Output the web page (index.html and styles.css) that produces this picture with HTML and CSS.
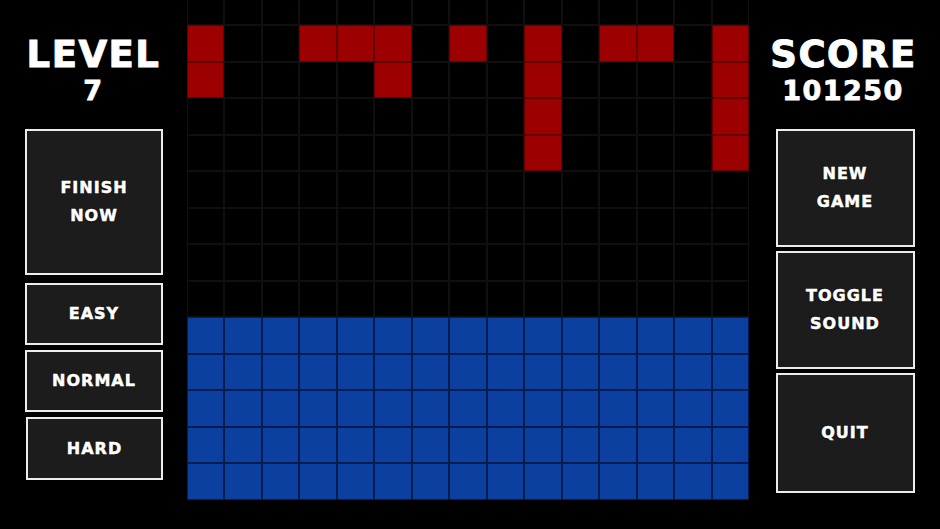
FILE: index.html
```html
<!DOCTYPE html>
<html>
<head>
<meta charset="utf-8">
<link rel="stylesheet" href="styles.css">
</head>
<body>
<div class="screen">
  <div class="side left">
    <div class="title">LEVEL</div>
    <div class="value">7</div>
    <div class="buttons left-buttons">
      <div class="btn finish">FINISH<br>NOW</div>
      <div class="btn small">EASY</div>
      <div class="btn small">NORMAL</div>
      <div class="btn small hard">HARD</div>
    </div>
  </div>
  <div class="board">
    <span class="e"></span><span class="e"></span><span class="e"></span><span class="e"></span><span class="e"></span><span class="e"></span><span class="e"></span><span class="e"></span><span class="e"></span><span class="e"></span><span class="e"></span><span class="e"></span><span class="e"></span><span class="e"></span><span class="e"></span>
    <span class="r"></span><span class="e"></span><span class="e"></span><span class="r"></span><span class="r"></span><span class="r"></span><span class="e"></span><span class="r"></span><span class="e"></span><span class="r"></span><span class="e"></span><span class="r"></span><span class="r"></span><span class="e"></span><span class="r"></span>
    <span class="r"></span><span class="e"></span><span class="e"></span><span class="e"></span><span class="e"></span><span class="r"></span><span class="e"></span><span class="e"></span><span class="e"></span><span class="r"></span><span class="e"></span><span class="e"></span><span class="e"></span><span class="e"></span><span class="r"></span>
    <span class="e"></span><span class="e"></span><span class="e"></span><span class="e"></span><span class="e"></span><span class="e"></span><span class="e"></span><span class="e"></span><span class="e"></span><span class="r"></span><span class="e"></span><span class="e"></span><span class="e"></span><span class="e"></span><span class="r"></span>
    <span class="e"></span><span class="e"></span><span class="e"></span><span class="e"></span><span class="e"></span><span class="e"></span><span class="e"></span><span class="e"></span><span class="e"></span><span class="r"></span><span class="e"></span><span class="e"></span><span class="e"></span><span class="e"></span><span class="r"></span>
    <span class="e"></span><span class="e"></span><span class="e"></span><span class="e"></span><span class="e"></span><span class="e"></span><span class="e"></span><span class="e"></span><span class="e"></span><span class="e"></span><span class="e"></span><span class="e"></span><span class="e"></span><span class="e"></span><span class="e"></span>
    <span class="e"></span><span class="e"></span><span class="e"></span><span class="e"></span><span class="e"></span><span class="e"></span><span class="e"></span><span class="e"></span><span class="e"></span><span class="e"></span><span class="e"></span><span class="e"></span><span class="e"></span><span class="e"></span><span class="e"></span>
    <span class="e"></span><span class="e"></span><span class="e"></span><span class="e"></span><span class="e"></span><span class="e"></span><span class="e"></span><span class="e"></span><span class="e"></span><span class="e"></span><span class="e"></span><span class="e"></span><span class="e"></span><span class="e"></span><span class="e"></span>
    <span class="e"></span><span class="e"></span><span class="e"></span><span class="e"></span><span class="e"></span><span class="e"></span><span class="e"></span><span class="e"></span><span class="e"></span><span class="e"></span><span class="e"></span><span class="e"></span><span class="e"></span><span class="e"></span><span class="e"></span>
    <span class="b"></span><span class="b"></span><span class="b"></span><span class="b"></span><span class="b"></span><span class="b"></span><span class="b"></span><span class="b"></span><span class="b"></span><span class="b"></span><span class="b"></span><span class="b"></span><span class="b"></span><span class="b"></span><span class="b"></span>
    <span class="b"></span><span class="b"></span><span class="b"></span><span class="b"></span><span class="b"></span><span class="b"></span><span class="b"></span><span class="b"></span><span class="b"></span><span class="b"></span><span class="b"></span><span class="b"></span><span class="b"></span><span class="b"></span><span class="b"></span>
    <span class="b"></span><span class="b"></span><span class="b"></span><span class="b"></span><span class="b"></span><span class="b"></span><span class="b"></span><span class="b"></span><span class="b"></span><span class="b"></span><span class="b"></span><span class="b"></span><span class="b"></span><span class="b"></span><span class="b"></span>
    <span class="b"></span><span class="b"></span><span class="b"></span><span class="b"></span><span class="b"></span><span class="b"></span><span class="b"></span><span class="b"></span><span class="b"></span><span class="b"></span><span class="b"></span><span class="b"></span><span class="b"></span><span class="b"></span><span class="b"></span>
    <span class="b"></span><span class="b"></span><span class="b"></span><span class="b"></span><span class="b"></span><span class="b"></span><span class="b"></span><span class="b"></span><span class="b"></span><span class="b"></span><span class="b"></span><span class="b"></span><span class="b"></span><span class="b"></span><span class="b"></span>
  </div>
  <div class="side right">
    <div class="title">SCORE</div>
    <div class="value">101250</div>
    <div class="buttons right-buttons">
      <div class="btn big">NEW<br>GAME</div>
      <div class="btn big">TOGGLE<br>SOUND</div>
      <div class="btn big quit">QUIT</div>
    </div>
  </div>
</div>
</body>
</html>
```

FILE: styles.css
```css
html, body {
  margin: 0;
  padding: 0;
  background: #000;
}

.screen {
  width: 940px;
  height: 529px;
  overflow: hidden;
  display: flex;
  background: #000;
  font-family: "DejaVu Sans", "Liberation Sans", sans-serif;
  font-weight: bold;
  color: #fff;
}

.side {
  display: flex;
  flex-direction: column;
  align-items: center;
}

.left {
  width: 187px;
}

.right {
  width: 191px;
}

.title {
  margin-top: 36px;
  font-size: 37px;
  line-height: 37px;
  letter-spacing: 1.5px;
  height: 37px;
  -webkit-text-stroke: 1px #fff;
}

.value {
  margin-top: 4px;
  font-size: 27px;
  line-height: 27px;
  letter-spacing: 1.5px;
  height: 27px;
  -webkit-text-stroke: 0.8px #fff;
}

.right .title {
  margin-left: -2px;
}

.right .value {
  margin-left: -3px;
}

.buttons {
  display: flex;
  flex-direction: column;
  margin-top: 25px;
}

.left-buttons {
  width: 138px;
  margin-left: 1px;
  gap: 5px;
}

.right-buttons {
  width: 139px;
  margin-left: 1px;
  gap: 3.5px;
}

.btn {
  box-sizing: border-box;
  border: 2px solid #ececec;
  background: #1c1c1c;
  display: flex;
  align-items: center;
  justify-content: center;
  text-align: center;
  font-size: 16px;
  line-height: 28px;
  letter-spacing: 1px;
  color: #fff;
  -webkit-text-stroke: 0.5px #fff;
  text-shadow: 0 0 2px #000;
}

.finish {
  height: 146px;
  margin-bottom: 3px;
}

.small {
  height: 62px;
}

.hard {
  height: 63px;
  margin-left: 1px;
}

.big {
  height: 118px;
}

.quit {
  height: 120px;
  margin-top: 0.5px;
}

.board {
  width: 562px;
  height: 511.5px;
  margin-top: -11.5px;
  display: grid;
  grid-template-columns: repeat(15, 1fr);
  grid-template-rows: repeat(14, 1fr);
}

.board span {
  box-sizing: border-box;
  display: block;
}

.e {
  background: #000;
  border: 1px solid #0f0f0f;
}

.r {
  background: #9c0000;
  border: 1px solid #5e0000;
}

.b {
  background: #0b40a0;
  border: 1px solid #061b4e;
}
```
